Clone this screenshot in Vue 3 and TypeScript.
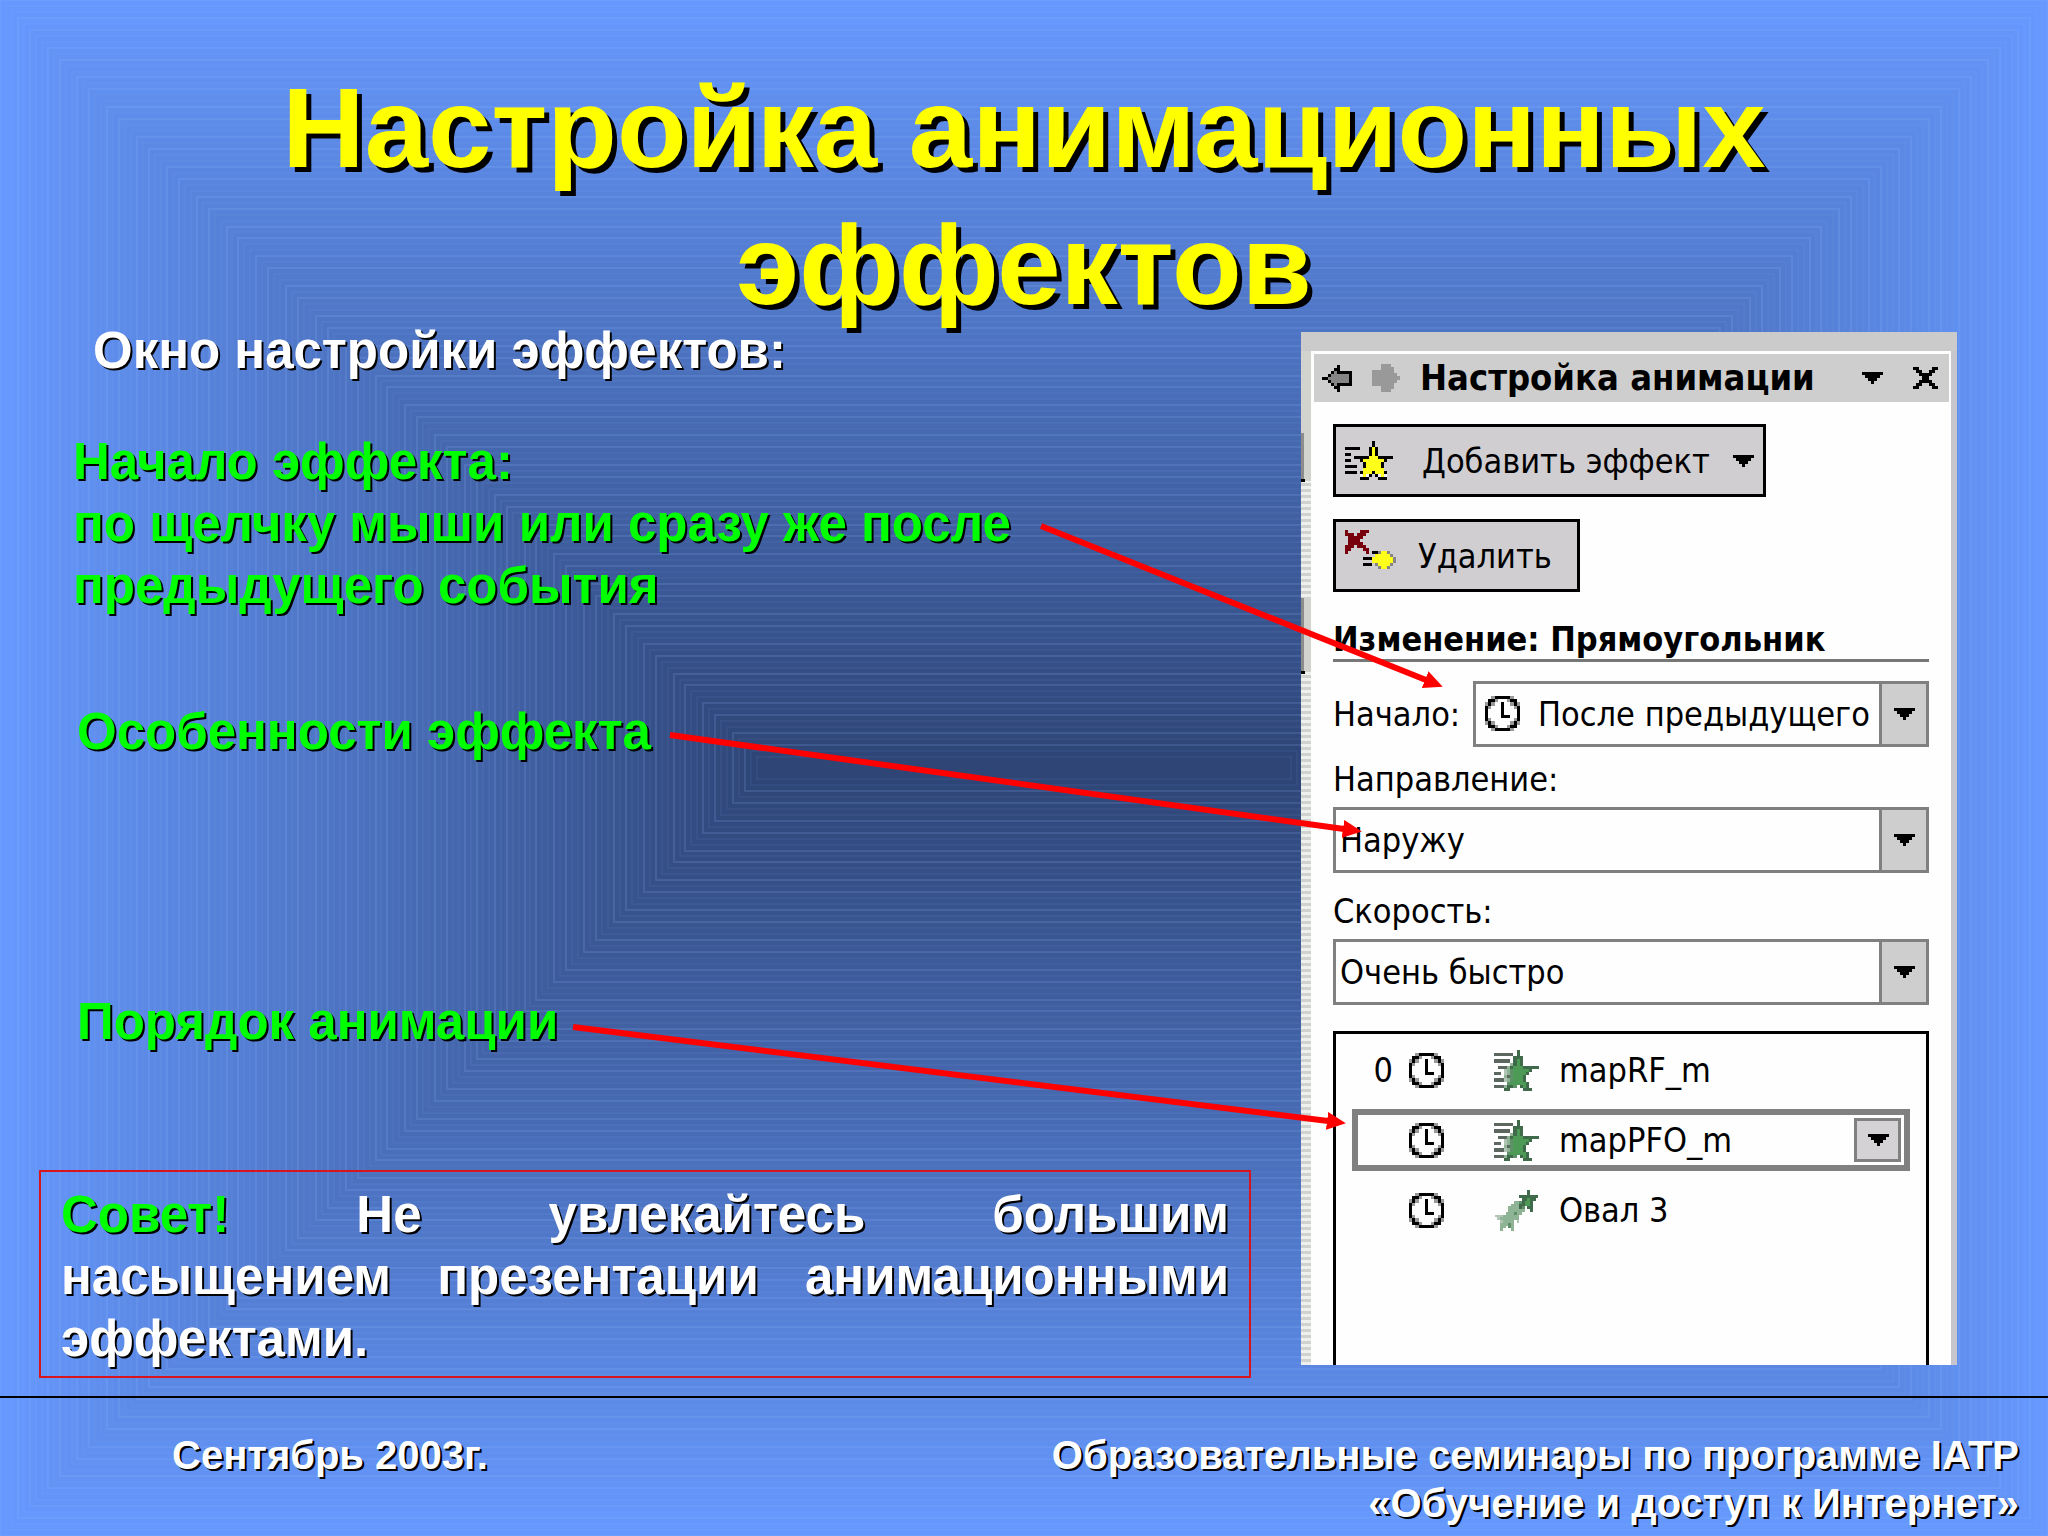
<script setup lang="ts">
import { ref } from 'vue'

interface Ring { inset: number; fill: string; seam: string }
interface Cell { x: number; y: number; fill: string }
interface Icon { cols: number; rows: number; cells: Cell[] }
interface Effect { order: string; name: string; icon: Icon; selected: boolean }

const outer = [102, 153, 255]
const inner = [46, 69, 118]
const ringCount = 128
const rings: Ring[] = Array.from({ length: ringCount }, (_, i) => {
  const t = i / (ringCount - 1)
  const rgb = outer.map((c, k) => Math.round(c + (inner[k] - c) * t))
  const strong = (i * 7) % 5 < 2
  return {
    inset: Math.round((i * 757) / (ringCount - 1)),
    fill: `rgb(${rgb.join(',')})`,
    seam: strong ? 'rgba(150,185,255,0.16)' : 'rgba(150,185,255,0.06)',
  }
})

const palette: Record<string, string> = {
  K: '#000000', G: '#858585', A: '#999999', Y: '#ffff1a', W: '#f4f4f4', R: '#78000c',
  g: '#3f6b4a', e: '#4c9a56', D: '#5c675f', p: '#8fb495', q: '#b3c6b5', m: '#5f9168',
}

function bitmap(rows: string[]): Icon {
  const cells: Cell[] = []
  rows.forEach((row, y) => {
    row.split('').forEach((ch, x) => {
      if (palette[ch]) cells.push({ x, y, fill: palette[ch] })
    })
  })
  return { cols: Math.max(...rows.map((r) => r.length)), rows: rows.length, cells }
}

const backIcon = bitmap([
  '.....K....',
  '....KK....',
  '...KGKKKKK',
  '..KGGGGGGK',
  'KKGGGGGGGK',
  '..KGGGGGGK',
  '...KGKKKKK',
  '....KK....',
  '.....K....',
])
const forwardIcon = bitmap([
  '...AAA...',
  '...AAAA..',
  'AAAAAAA..',
  'AAAAAAAA.',
  'AAAAAAAAA',
  'AAAAAAAA.',
  'AAAAAAA..',
  '...AAAA..',
  '...AAA...',
])
const triangle = bitmap(['KKKKKKK', '.KKKKK.', '..KKK..', '...K...'])
const closeIcon = bitmap([
  'KK....KK',
  '.KK..KK.',
  '..KKKK..',
  '...KK...',
  '..KKKK..',
  '.KK..KK.',
  'KK....KK',
])
const addIcon = bitmap([
  '.........K.......',
  '.........K.......',
  'KKKKK...KYK......',
  '........KYK......',
  'KK......KYK......',
  '...KKKKKYYYKKKKK.',
  'KK...KYYYYYYYK...',
  '......KYYYYYK....',
  'KKKK..KYYYYYK....',
  '......YYYYYYY....',
  'KKKK.KYYYKYYYK...',
  '.....WYWK.KWYW...',
  '.....KKK...KKK...',
])
const removeIcon = bitmap([
  'R....RRR.........',
  'RRR.RRR..........',
  '.RRRRR...........',
  '.RRRR............',
  '.RRRRR...........',
  'RRR.RRR..........',
  'RR....RR.........',
  'R......R.KKGYYG..',
  '..........YYYYYG.',
  '......KKKYYYYYYYG',
  '.........YYYYYYYG',
  '......KKK.GYYYYG.',
  '...........GYYG..',
])
const clockIcon = bitmap([
  '..AKKKKKA..',
  '.KKA...AKK.',
  'AKA..K..AKA',
  'KA...K...AK',
  'K....K....K',
  'K....K....K',
  'K....KKK..K',
  'KA.......AK',
  'AKA.....AKA',
  '.KKA...AKK.',
  '..AKKKKKA..',
])
const flyIcon = bitmap([
  '.......g......',
  'DDDDDD.g......',
  '......ggg.....',
  'DDDDD.geg.....',
  '.....pgeg.....',
  '.DDDpgeeeggggg',
  '...qpmeeeeeg..',
  'DD.qpmeeeeg...',
  '...pDmeeeg....',
  'DDDqpmeeeg....',
  '....meeeeeg...',
  'DDDpggm.geg...',
  '...gg....ggg..',
])
const trailIcon = bitmap([
  '............g...',
  '............g...',
  '.........ggggggg',
  '..........ggegg.',
  '.......ppmgeeg..',
  '......pppggeeg..',
  '.....ppppgm.gg..',
  '.....pppppp..g..',
  '....pppmpp......',
  'qqqpppppp.......',
  '.qppppppp.......',
  '..qpppp.q.......',
  '..pppmp.........',
  '..pp.mp.........',
  '..p...p.........',
])

const start = ref('after')
const direction = ref('out')
const speed = ref('veryfast')

const effects: Effect[] = [
  { order: '0', name: 'mapRF_m', icon: flyIcon, selected: false },
  { order: '', name: 'mapPFO_m', icon: flyIcon, selected: true },
  { order: '', name: 'Овал 3', icon: trailIcon, selected: false },
]

const arrows = [
  { x1: 1041, y1: 526, x2: 1426, y2: 680 },
  { x1: 670, y1: 735, x2: 1344, y2: 829 },
  { x1: 573, y1: 1027, x2: 1328, y2: 1121 },
]
</script>

<template>
  <main class="slide">
    <svg class="backdrop" viewBox="0 0 2048 1536" preserveAspectRatio="none" aria-hidden="true">
      <rect
        v-for="r in rings" :key="r.inset"
        :x="r.inset" :y="r.inset" :width="2048 - 2 * r.inset" :height="1536 - 2 * r.inset"
        :fill="r.fill" :stroke="r.seam" stroke-width="2"
      />
    </svg>

    <h1 class="title">Настройка анимационных эффектов</h1>

    <div class="content">
      <section class="notes">
        <h2 class="lead">Окно настройки эффектов:</h2>
        <p class="note first">Начало эффекта:<br>по щелчку мыши или сразу же после предыдущего события</p>
        <p class="note second">Особенности эффекта</p>
        <p class="note third">Порядок анимации</p>
        <p class="tip"><span class="tip-word">Совет!</span> Не увлекайтесь большим насыщением презентации анимационными эффектами.</p>
      </section>

      <aside class="pane">
        <div class="pane-top"></div>
        <div class="pane-strip"></div>
        <div class="pane-main">
          <header class="pane-header">
            <button class="bare" type="button" aria-label="Назад">
              <svg class="i-back" :viewBox="`0 0 ${backIcon.cols} ${backIcon.rows}`" shape-rendering="crispEdges">
                <rect v-for="(c, i) in backIcon.cells" :key="i" :x="c.x" :y="c.y" width="1" height="1" :fill="c.fill" />
              </svg>
            </button>
            <button class="bare" type="button" aria-label="Вперёд">
              <svg class="i-forward" :viewBox="`0 0 ${forwardIcon.cols} ${forwardIcon.rows}`" shape-rendering="crispEdges">
                <rect v-for="(c, i) in forwardIcon.cells" :key="i" :x="c.x" :y="c.y" width="1" height="1" :fill="c.fill" />
              </svg>
            </button>
            <h2 class="pane-title">Настройка анимации</h2>
            <button class="bare" type="button" aria-label="Меню">
              <svg class="i-tri" viewBox="0 0 7 4" shape-rendering="crispEdges">
                <rect v-for="(c, i) in triangle.cells" :key="i" :x="c.x" :y="c.y" width="1" height="1" :fill="c.fill" />
              </svg>
            </button>
            <button class="bare" type="button" aria-label="Закрыть">
              <svg class="i-close" viewBox="0 0 8 7" shape-rendering="crispEdges">
                <rect v-for="(c, i) in closeIcon.cells" :key="i" :x="c.x" :y="c.y" width="1" height="1" :fill="c.fill" />
              </svg>
            </button>
          </header>

          <div class="pane-body">
            <button class="action" type="button">
              <svg class="i-action" :viewBox="`0 0 ${addIcon.cols} ${addIcon.rows}`" shape-rendering="crispEdges" aria-hidden="true">
                <rect v-for="(c, i) in addIcon.cells" :key="i" :x="c.x" :y="c.y" width="1" height="1" :fill="c.fill" />
              </svg>
              <span>Добавить эффект</span>
              <svg class="i-tri" viewBox="0 0 7 4" shape-rendering="crispEdges" aria-hidden="true">
                <rect v-for="(c, i) in triangle.cells" :key="i" :x="c.x" :y="c.y" width="1" height="1" :fill="c.fill" />
              </svg>
            </button>
            <button class="action remove" type="button">
              <svg class="i-action" :viewBox="`0 0 ${removeIcon.cols} ${removeIcon.rows}`" shape-rendering="crispEdges" aria-hidden="true">
                <rect v-for="(c, i) in removeIcon.cells" :key="i" :x="c.x" :y="c.y" width="1" height="1" :fill="c.fill" />
              </svg>
              <span>Удалить</span>
            </button>

            <h3 class="change">Изменение: Прямоугольник</h3>

            <div class="field inline">
              <label for="start">Начало:</label>
              <div class="combo with-clock">
                <select id="start" v-model="start">
                  <option value="after">После предыдущего</option>
                  <option value="click">По щелчку</option>
                </select>
                <svg class="i-clock in-combo" viewBox="0 0 11 11" shape-rendering="crispEdges" aria-hidden="true">
                  <rect v-for="(c, i) in clockIcon.cells" :key="i" :x="c.x" :y="c.y" width="1" height="1" :fill="c.fill" />
                </svg>
                <span class="drop">
                  <svg class="i-tri" viewBox="0 0 7 4" shape-rendering="crispEdges" aria-hidden="true">
                    <rect v-for="(c, i) in triangle.cells" :key="i" :x="c.x" :y="c.y" width="1" height="1" :fill="c.fill" />
                  </svg>
                </span>
              </div>
            </div>

            <div class="field">
              <label for="direction">Направление:</label>
              <div class="combo">
                <select id="direction" v-model="direction">
                  <option value="out">Наружу</option>
                  <option value="in">Внутрь</option>
                </select>
                <span class="drop">
                  <svg class="i-tri" viewBox="0 0 7 4" shape-rendering="crispEdges" aria-hidden="true">
                    <rect v-for="(c, i) in triangle.cells" :key="i" :x="c.x" :y="c.y" width="1" height="1" :fill="c.fill" />
                  </svg>
                </span>
              </div>
            </div>

            <div class="field speed">
              <label for="speed">Скорость:</label>
              <div class="combo">
                <select id="speed" v-model="speed">
                  <option value="veryfast">Очень быстро</option>
                  <option value="fast">Быстро</option>
                </select>
                <span class="drop">
                  <svg class="i-tri" viewBox="0 0 7 4" shape-rendering="crispEdges" aria-hidden="true">
                    <rect v-for="(c, i) in triangle.cells" :key="i" :x="c.x" :y="c.y" width="1" height="1" :fill="c.fill" />
                  </svg>
                </span>
              </div>
            </div>

            <ul class="effects">
              <li v-for="e in effects" :key="e.name" class="effect" :class="{ selected: e.selected }">
                <span class="order">{{ e.order }}</span>
                <svg class="i-clock" viewBox="0 0 11 11" shape-rendering="crispEdges" aria-hidden="true">
                  <rect v-for="(c, i) in clockIcon.cells" :key="i" :x="c.x" :y="c.y" width="1" height="1" :fill="c.fill" />
                </svg>
                <svg class="i-effect" :viewBox="`0 0 ${e.icon.cols} ${e.icon.rows}`" shape-rendering="crispEdges" aria-hidden="true">
                  <rect v-for="(c, i) in e.icon.cells" :key="i" :x="c.x" :y="c.y" width="1" height="1" :fill="c.fill" />
                </svg>
                <span class="effect-name">{{ e.name }}</span>
                <button v-if="e.selected" class="more" type="button" aria-label="Параметры эффекта">
                  <svg class="i-tri" viewBox="0 0 7 4" shape-rendering="crispEdges">
                    <rect v-for="(c, i) in triangle.cells" :key="i" :x="c.x" :y="c.y" width="1" height="1" :fill="c.fill" />
                  </svg>
                </button>
              </li>
            </ul>
          </div>
        </div>
      </aside>
    </div>

    <footer class="footer">
      <p>Сентябрь 2003г.</p>
      <p class="program">Образовательные семинары по программе IATP<br>«Обучение и доступ к Интернет»</p>
    </footer>

    <svg class="arrows" viewBox="0 0 2048 1536" preserveAspectRatio="none" aria-hidden="true">
      <defs>
        <marker id="head" markerUnits="userSpaceOnUse" markerWidth="20" markerHeight="20" refX="1" refY="9" orient="auto">
          <path d="M0 0 L19 9 L0 18 Z" fill="#ff0000" />
        </marker>
      </defs>
      <line
        v-for="a in arrows" :key="a.y1" :x1="a.x1" :y1="a.y1" :x2="a.x2" :y2="a.y2"
        stroke="#ff0000" stroke-width="6" marker-end="url(#head)"
      />
    </svg>
  </main>
</template>

<style>
body {
  margin: 0;
  background: #6699ff;
}
</style>

<style scoped>
.slide {
  position: relative;
  isolation: isolate;
  display: flex;
  flex-direction: column;
  box-sizing: border-box;
  min-height: 100vh;
  overflow: hidden;
  padding-top: 59px;
  font-family: "Liberation Sans", Arial, sans-serif;
  font-weight: 700;
  color: #fff;
}
h1, h2, h3, p, ul {
  margin: 0;
  padding: 0;
}
svg {
  display: block;
  flex: none;
}
.backdrop, .arrows {
  position: absolute;
  inset: 0;
  width: 100%;
  height: 100%;
  pointer-events: none;
}
.backdrop {
  z-index: -1;
}
.title {
  padding: 0 140px;
  font-size: 114px;
  line-height: 137px;
  text-align: center;
  color: #ffff00;
  text-shadow: 5px 5px 0 #000;
}
.content {
  display: grid;
  grid-template-columns: 1fr 656px;
  column-gap: 50px;
  padding: 0 91px 0 39px;
}
.notes {
  margin-top: -13px;
  font-size: 51px;
  line-height: 62px;
  text-shadow: 2px 2px 0 #000;
}
.lead {
  padding-left: 54px;
  font-size: 51px;
}
.note {
  padding-left: 38px;
  color: #00ff00;
}
.first {
  margin-top: 49px;
  padding-left: 34px;
  padding-right: 180px;
}
.second {
  margin-top: 84px;
}
.third {
  margin-top: 228px;
}
.tip {
  margin-top: 117px;
  padding: 12px 20px 6px;
  border: 2px solid #d8141e;
  text-align: justify;
}
.tip-word {
  color: #00ff00;
}

.pane {
  display: grid;
  grid-template-columns: 10px 1fr;
  grid-template-rows: 19px 1fr;
  margin: -1px 0 13px;
  border-right: 6px solid #c8c6cc;
  background: #fefefe;
  font-family: "DejaVu Sans Condensed", "DejaVu Sans", Tahoma, sans-serif;
  font-size: 34px;
  font-weight: 400;
  color: #000;
}
.pane-top {
  grid-column: 1 / 3;
  margin-right: -6px;
  background: #cbcbcb;
}
.pane-strip {
  background:
    linear-gradient(#8c8c8c, #8c8c8c) 0 82px / 3px 46px no-repeat,
    linear-gradient(#000, #000) 0 128px / 4px 3px no-repeat,
    linear-gradient(#8c8c8c, #8c8c8c) 0 247px / 3px 73px no-repeat,
    linear-gradient(#000, #000) 0 320px / 4px 3px no-repeat,
    linear-gradient(#d2d2ce, #d2d2ce) 0 0 / 100% 130px no-repeat,
    linear-gradient(#d2d2ce, #d2d2ce) 0 247px / 100% 73px no-repeat,
    repeating-linear-gradient(#d0d2cf 0 3px, #eef0ee 3px 6px);
}
.pane-main {
  display: flex;
  flex-direction: column;
}
.pane-header {
  display: flex;
  align-items: center;
  box-sizing: border-box;
  height: 48px;
  margin: 3px 2px 0 3px;
  padding: 0 11px 0 8px;
  background: #cecece;
}
.bare {
  padding: 0;
  border: 0;
  background: none;
}
.i-back {
  width: 30px;
  height: 28px;
}
.i-forward {
  width: 28px;
  height: 28px;
  margin-left: 20px;
}
.pane-title {
  flex: 1;
  margin-left: 20px;
  font-size: 36px;
  line-height: 48px;
  white-space: nowrap;
}
.i-tri {
  width: 22px;
  height: 12px;
}
.i-close {
  width: 25px;
  height: 22px;
  margin-left: 30px;
}
.pane-body {
  flex: 1;
  display: flex;
  flex-direction: column;
  align-items: stretch;
  padding: 22px 22px 0;
}
.action {
  display: flex;
  align-items: center;
  align-self: flex-start;
  box-sizing: border-box;
  height: 73px;
  padding: 0 9px;
  border: 3px solid #000;
  background: #d0ced0;
  font: inherit;
  color: #000;
}
.action span {
  margin: 0 22px 0 26px;
  white-space: nowrap;
}
.remove {
  margin-top: 22px;
}
.remove span {
  margin: 0 16px 0 22px;
}
.i-action {
  width: 51px;
  height: 41px;
}
.remove .i-action {
  margin-bottom: 12px;
}
.change {
  margin-top: 28px;
  border-bottom: 3px solid #777;
  font-size: 34px;
  line-height: 39px;
  white-space: nowrap;
}
.field label {
  display: block;
  height: 48px;
  margin-top: 12px;
  line-height: 40px;
}
.speed {
  margin-top: 6px;
}
.inline {
  display: flex;
  align-items: center;
  margin-top: 19px;
}
.inline label {
  width: 140px;
  height: 40px;
  margin-top: 0;
}
.combo {
  position: relative;
  flex: 1;
}
.combo select {
  display: block;
  box-sizing: border-box;
  width: 100%;
  height: 66px;
  padding: 0 50px 0 4px;
  appearance: none;
  border: 3px solid #808080;
  border-radius: 0;
  background: #fefefe;
  font: inherit;
  color: #000;
}
.with-clock select {
  padding-left: 62px;
}
.in-combo {
  position: absolute;
  left: 12px;
  top: 15px;
}
.drop {
  position: absolute;
  top: 0;
  right: 0;
  display: flex;
  align-items: center;
  justify-content: center;
  box-sizing: border-box;
  width: 50px;
  height: 66px;
  border: 3px solid #808080;
  background: #cecece;
  pointer-events: none;
}
.i-clock {
  width: 35px;
  height: 35px;
}
.effects {
  flex: 1;
  display: flex;
  flex-direction: column;
  gap: 8px;
  margin-top: 26px;
  padding: 5px 16px 0;
  border: 3px solid #000;
  border-bottom: 0;
  list-style: none;
}
.effect {
  display: flex;
  align-items: center;
  box-sizing: border-box;
  height: 62px;
  padding-right: 3px;
  border: 6px solid transparent;
}
.selected {
  border-color: #808080;
}
.order {
  width: 35px;
  margin-right: 16px;
  text-align: right;
}
.i-effect {
  width: 45px;
  height: 41px;
  margin: 0 20px 0 50px;
}
.effect-name {
  flex: 1;
}
.more {
  display: flex;
  align-items: center;
  justify-content: center;
  width: 47px;
  height: 44px;
  padding: 0;
  border: 3px solid #808080;
  background: #d4d2d4;
}
.footer {
  display: flex;
  justify-content: space-between;
  margin-top: 18px;
  padding: 33px 29px 9px 172px;
  border-top: 2px solid #000;
  font-size: 40px;
  line-height: 48px;
  text-shadow: 2px 2px 0 #000;
}
.program {
  text-align: right;
}
</style>
